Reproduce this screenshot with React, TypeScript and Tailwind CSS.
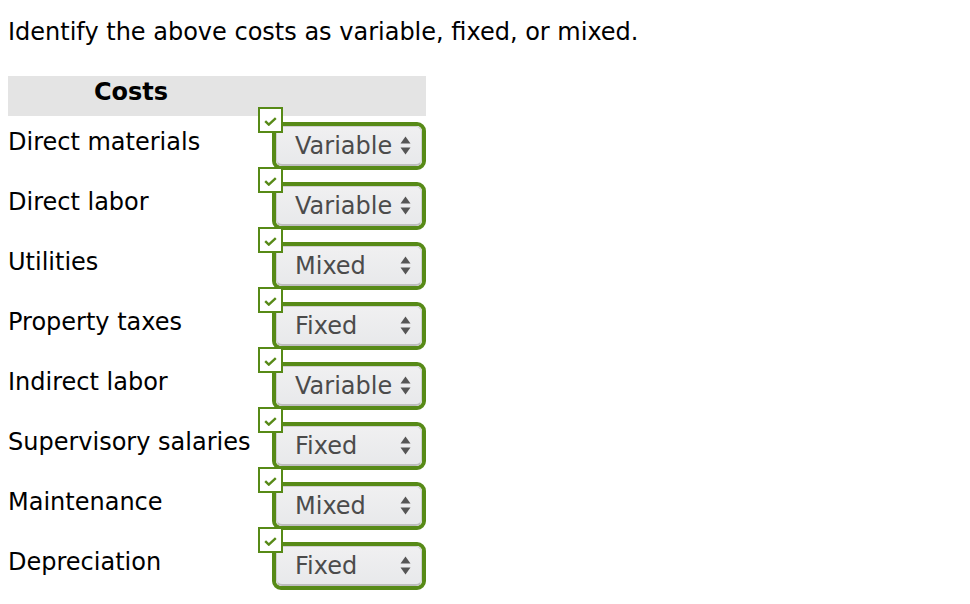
import React from "react";

const rows: [string, string][] = [
  ["Direct materials", "Variable"],
  ["Direct labor", "Variable"],
  ["Utilities", "Mixed"],
  ["Property taxes", "Fixed"],
  ["Indirect labor", "Variable"],
  ["Supervisory salaries", "Fixed"],
  ["Maintenance", "Mixed"],
  ["Depreciation", "Fixed"],
];

function Arrows() {
  return (
    <svg width="11" height="19" viewBox="0 0 11 19" className="shrink-0">
      <polygon points="0.5,7.5 5.5,0.5 10.5,7.5" fill="#555555" />
      <polygon points="0.5,11.5 10.5,11.5 5.5,18.5" fill="#555555" />
    </svg>
  );
}

function Row({ label, value }: { label: string; value: string }) {
  return (
    <div className="flex h-[60px]">
      <div className="w-[246px] shrink-0 whitespace-nowrap pt-[12px] leading-[29px]">{label}</div>
      <div className="relative ml-[18px] mt-[6px] h-[48px] w-[154px] rounded-[9px] border-[4px] border-[#578a17] bg-white">
        <div className="flex h-full items-center justify-between rounded-[6px] border border-[#cfcfcf] border-b-[2px] border-b-[#bdbdbd] bg-gradient-to-b from-[#f0f0f1] to-[#e8e9eb] pl-[18px] pr-[10px] text-[#4b4b4b] leading-[29px]">
          <span className="pt-[2px]">{value}</span>
          <Arrows />
        </div>
        <div className="absolute left-[-18px] top-[-19px] flex h-[26px] w-[25px] items-start justify-center border-2 border-[#578a17] bg-white pt-[8px]">
          <svg width="13" height="9" viewBox="0 0 13 9">
            <polyline points="1.2,4.2 4.8,7.6 11.8,1.2" fill="none" stroke="#578a17" strokeWidth="2.4" />
          </svg>
        </div>
      </div>
    </div>
  );
}

export default function App() {
  return (
    <div className="min-h-[604px] bg-white pl-2 pt-[18px] font-['Verdana','DejaVu_Sans',sans-serif] text-[24px] text-black">
      <p className="leading-[29px] whitespace-nowrap">Identify the above costs as variable, fixed, or mixed.</p>
      <div className="mt-[29px] w-[418px]">
        <div className="flex h-[40px] bg-[#e4e4e4]">
          <div className="w-[246px] pt-[1px] text-center font-bold leading-[30px]">Costs</div>
        </div>
        {rows.map(([l, v]) => (
          <Row key={l} label={l} value={v} />
        ))}
      </div>
    </div>
  );
}
